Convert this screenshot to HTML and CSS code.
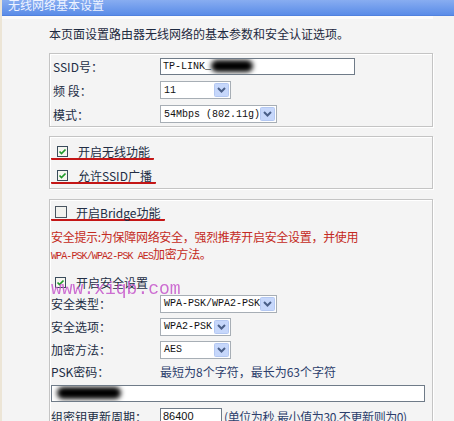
FILE: index.html
```html
<html>
  <head>
    <link rel="stylesheet" href="styles.css">
  </head>
  <body>
    <div class="title"><span>无线网络基本设置</span></div>
    <div class="page">
      <p class="intro">本页面设置路由器无线网络的基本参数和安全认证选项。</p>

      <!-- basic -->
      <div class="box basic">
        <div class="row">
          <label>SSID号：</label>
          <div class="text ssid">TP-LINK_<span class="blot"></span></div>
        </div>
        <div class="row">
          <label>频 段：</label>
          <div class="select narrow">
            <span>11</span>
            <svg class="arrow" width="15" height="14" viewBox="0 0 15 14"><rect x=".5" y=".5" width="14" height="13" rx="1" fill="#c6d7fb" stroke="#b4c8f2"/><path d="M4 5 L7.5 8.5 L11 5" fill="none" stroke="#4a5f88" stroke-width="2"/></svg>
          </div>
        </div>
        <div class="row">
          <label>模式：</label>
          <div class="select wide">
            <span>54Mbps (802.11g)</span>
            <svg class="arrow" width="15" height="14" viewBox="0 0 15 14"><rect x=".5" y=".5" width="14" height="13" rx="1" fill="#c6d7fb" stroke="#b4c8f2"/><path d="M4 5 L7.5 8.5 L11 5" fill="none" stroke="#4a5f88" stroke-width="2"/></svg>
          </div>
        </div>
      </div>

      <!-- switches -->
      <div class="box checks">
        <div class="row chk">
          <span class="marked">
            <svg width="11" height="11" viewBox="0 0 11 11"><rect x=".5" y=".5" width="10" height="10" fill="#f6f6f0" stroke="#3a4c5c"/><path d="M2.5 5.5 L4.5 7.5 L8.5 3.5" fill="none" stroke="#1f9a2a" stroke-width="1.7"/></svg>
            开启无线功能
          </span>
        </div>
        <div class="row chk">
          <span class="marked">
            <svg width="11" height="11" viewBox="0 0 11 11"><rect x=".5" y=".5" width="10" height="10" fill="#f6f6f0" stroke="#3a4c5c"/><path d="M2.5 5.5 L4.5 7.5 L8.5 3.5" fill="none" stroke="#1f9a2a" stroke-width="1.7"/></svg>
            允许SSID广播
          </span>
        </div>
      </div>

      <!-- security -->
      <div class="box security">
        <div class="row chk bridge">
          <span class="marked">
            <svg width="12" height="12" viewBox="0 0 12 12"><rect x=".5" y=".5" width="11" height="11" fill="#f2f2ee" stroke="#4a5560"/></svg>
            开启Bridge功能
          </span>
        </div>
        <div class="warn">
          <div>安全提示:为保障网络安全，强烈推荐开启安全设置，并使用</div>
          <div><span class="latin">WPA-PSK/WPA2-PSK AES</span>加密方法。</div>
        </div>
        <div class="row chk secure">
          <svg width="11" height="11" viewBox="0 0 11 11"><rect x=".5" y=".5" width="10" height="10" fill="#f6f6f0" stroke="#3a4c5c"/><path d="M2.5 5.5 L4.5 7.5 L8.5 3.5" fill="none" stroke="#1f9a2a" stroke-width="1.7"/></svg>
          开启安全设置
        </div>
        <div class="row">
          <label>安全类型：</label>
          <div class="select wide">
            <span>WPA-PSK/WPA2-PSK</span>
            <svg class="arrow" width="15" height="14" viewBox="0 0 15 14"><rect x=".5" y=".5" width="14" height="13" rx="1" fill="#c6d7fb" stroke="#b4c8f2"/><path d="M4 5 L7.5 8.5 L11 5" fill="none" stroke="#4a5f88" stroke-width="2"/></svg>
          </div>
        </div>
        <div class="row">
          <label>安全选项：</label>
          <div class="select narrow">
            <span>WPA2-PSK</span>
            <svg class="arrow" width="15" height="14" viewBox="0 0 15 14"><rect x=".5" y=".5" width="14" height="13" rx="1" fill="#c6d7fb" stroke="#b4c8f2"/><path d="M4 5 L7.5 8.5 L11 5" fill="none" stroke="#4a5f88" stroke-width="2"/></svg>
          </div>
        </div>
        <div class="row">
          <label>加密方法：</label>
          <div class="select narrow">
            <span>AES</span>
            <svg class="arrow" width="15" height="14" viewBox="0 0 15 14"><rect x=".5" y=".5" width="14" height="13" rx="1" fill="#c6d7fb" stroke="#b4c8f2"/><path d="M4 5 L7.5 8.5 L11 5" fill="none" stroke="#4a5f88" stroke-width="2"/></svg>
          </div>
        </div>
        <div class="row short">
          <label>PSK密码：</label>
          <span class="hint">最短为8个字符，最长为63个字符</span>
        </div>
        <div class="row pass">
          <div class="text psk"><span class="blot"></span></div>
        </div>
        <div class="row last">
          <label>组密钥更新周期：</label>
          <div class="text period">86400</div>
          <span class="hint">(单位为秒,最小值为30,不更新则为0)</span>
        </div>

        <div class="stamp">www.xiqb.com</div>
      </div>
    </div>
  </body>
</html>
```

FILE: styles.css
```css
html, body {
  overflow: hidden;
}
body {
  margin: 0;
  height: 421px;
  background: #f4f4f4;
  border-left: 2px solid #ece5d6;
  font-family: "Noto Sans CJK SC", sans-serif;
  font-size: 12px;
  color: #222d44;
}

/* HEADER ===================================== */
.title {
  height: 15px;
  display: flex;
  align-items: flex-end;
  overflow: hidden;
  padding-left: 6px;
  background: linear-gradient(#88adf1, #5a8ce8);
  border-bottom: 1px solid #5081de;
  color: #eef3ff;
}
.title span { line-height: 20px; }

.page {
  border-top: 3px solid #fbfbfb;
  padding: 8px 0 0 47px;
  width: 384px;
}
.intro {
  margin: 0;
  line-height: 14px;
  color: #1e2a40;
}

/* BOXES ====================================== */
.box {
  border: 1px solid #c4c4c4;
  box-shadow: inset 1px 1px 0 #fff, 1px 1px 0 #fff;
}
.basic { margin-top: 12px; }
.checks { margin-top: 9px; padding-top: 3px; }
.security {
  position: relative;
  margin-top: 10px;
  padding-top: 1px;
}

.row {
  display: flex;
  align-items: center;
  height: 24px;
  padding-left: 3px;
}
.row label {
  width: 107px;
  flex: none;
}
.security .row { height: 23px; padding-left: 1px; }
.security .row label { width: 109px; }

/* CONTROLS =================================== */
.text {
  display: flex;
  align-items: center;
  height: 15px;
  border: 1px solid #6f7b88;
  background: #fff;
  padding: 0 2px;
  font-family: "Liberation Mono", monospace;
  font-size: 10px;
  color: #111;
  overflow: hidden;
}
.ssid { width: 189px; }
.psk { width: 368px; }
.period {
  width: 56px;
  font-family: "Liberation Sans", sans-serif;
  font-size: 11px;
}
.blot {
  display: inline-block;
  width: 42px;
  height: 12px;
  border-radius: 6px;
  background: #000;
  filter: blur(2.5px);
}
.psk .blot { width: 64px; margin-left: 3px; }

.select {
  display: flex;
  align-items: center;
  height: 14px;
  padding: 1px;
  border: 1px solid #a7aeb5;
  background: #fff;
  font-family: "Liberation Mono", monospace;
  font-size: 10px;
  color: #111;
}
.select span { flex: 1; padding-left: 2px; white-space: pre; }
.select.narrow { width: 67px; }
.select.wide { width: 113px; }
.arrow { flex: none; }

/* CHECKS ===================================== */
.row.chk { padding-left: 1px; }
.marked {
  display: inline-flex;
  align-items: center;
  gap: 10px;
  height: 14px;
  padding: 0 4px 0 6px;
  border-bottom: 2px solid #c41616;
  border-radius: 1px;
}
.bridge { height: 24px !important; }
.bridge .marked { padding-left: 4px; gap: 9px; }
.secure {
  gap: 10px;
  height: 20px !important;
  margin-top: 7px;
  padding-left: 5px !important;
}

.warn {
  margin-top: 3px;
  padding-left: 1px;
  line-height: 17px;
  color: #c42a22;
  letter-spacing: -0.3px;
}
.warn .latin {
  font-family: "Liberation Mono", monospace;
  font-size: 10px;
  letter-spacing: -0.9px;
}

.hint { color: #2c3e6c; }
.short { height: 21px !important; }
.pass { height: 22px !important; }
.last { height: 24px !important; }
.last .hint { margin-left: 2px; letter-spacing: -0.4px; }

/* WATERMARK ================================== */
.stamp {
  position: absolute;
  top: 80px;
  left: 1px;
  font-family: "Liberation Mono", monospace;
  font-size: 18px;
  line-height: 18px;
  color: #c657cc;
  opacity: 0.85;
  pointer-events: none;
}
```
